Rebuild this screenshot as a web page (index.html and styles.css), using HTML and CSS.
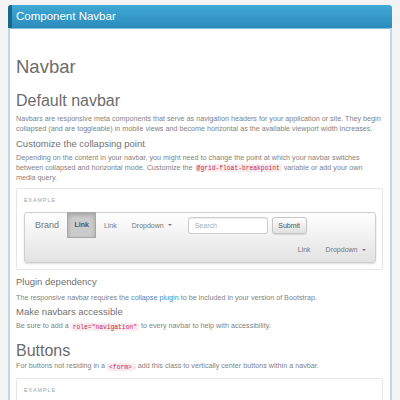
FILE: index.html
```html
<!DOCTYPE html>
<html lang="en">
<head>
<meta charset="utf-8">
<title>Component Navbar</title>
<link rel="stylesheet" href="styles.css">
</head>
<body>
<div class="panel">
  <div class="panel-head">Component Navbar</div>
  <div class="panel-body">
    <h1 class="title">Navbar</h1>
    <h2 class="sub">Default navbar</h2>
    <p class="text t1">Navbars are responsive meta components that serve as navigation headers for your application or site. They begin collapsed (and are toggleable) in mobile views and become horizontal as the available viewport width increases.</p>
    <h3 class="minor m1">Customize the collapsing point</h3>
    <p class="text t2">Depending on the content in your navbar, you might need to change the point at which your navbar switches between collapsed and horizontal mode. Customize the <code class="code">@grid-float-breakpoint</code> variable or add your own media query.</p>
    <div class="example">
      <div class="example-label">EXAMPLE</div>
      <div class="navbar">
        <div class="nav-row">
          <span class="brand">Brand</span>
          <ul class="nav">
            <li class="nav-item active">Link</li>
            <li class="nav-item">Link</li>
            <li class="nav-item">Dropdown <span class="caret"></span></li>
          </ul>
          <div class="nav-form">
            <span class="search">Search</span>
            <span class="btn">Submit</span>
          </div>
        </div>
        <div class="nav-row row-right">
          <ul class="nav">
            <li class="nav-item">Link</li>
            <li class="nav-item">Dropdown <span class="caret"></span></li>
          </ul>
        </div>
      </div>
    </div>
    <h3 class="minor m2">Plugin dependency</h3>
    <p class="text t3">The responsive navbar requires the <a class="link" href="#">collapse plugin</a> to be included in your version of Bootstrap.</p>
    <h3 class="minor m3">Make navbars accessible</h3>
    <p class="text t4">Be sure to add a <code class="code">role="navigation"</code> to every navbar to help with accessibility.</p>
    <h2 class="sub s2">Buttons</h2>
    <p class="text t5">For buttons not residing in a <code class="code">&lt;form&gt;</code>, add this class to vertically center buttons within a navbar.</p>
    <div class="example ex2">
      <div class="example-label">EXAMPLE</div>
    </div>
  </div>
</div>
</body>
</html>
```
FILE: styles.css
```css
html, body {
  margin: 0;
  padding: 0;
}
body {
  background: #f3f3f3;
  font-family: "Liberation Sans", Arial, sans-serif;
  padding: 5px 8px 0 8px;
  overflow: hidden;
}
.panel {
  background: #ffffff;
  border-radius: 3px 3px 0 0;
}
.panel-head {
  height: 23px;
  line-height: 23px;
  background: linear-gradient(#40a9d5, #2b8bbb);
  border-left: 4px solid #1c6787;
  border-radius: 3px 3px 0 0;
  color: #ffffff;
  font-size: 11.5px;
  padding-left: 4px;
  box-shadow: 0 1px 0 #7fbfe0;
}
.panel-body {
  border-left: 2px solid #c3d7ec;
  border-right: 2px solid #c3d7ec;
  padding: 29px 7px 20px 6px;
  height: 400px;
}
.title {
  margin: 0;
  font-weight: normal;
  font-size: 18.5px;
  line-height: 20px;
  color: #6c6c6c;
}
.sub {
  margin: 15px 0 0 0;
  font-weight: normal;
  font-size: 16px;
  line-height: 18px;
  color: #6c6c6c;
}
.minor {
  margin: 0;
  font-weight: normal;
  font-size: 9.5px;
  line-height: 12px;
  color: #707070;
}
.text {
  margin: 0;
  font-size: 7.2px;
  line-height: 10.1px;
  color: #828282;
}
.t1 { margin-top: 4px; }
.m1 { margin-top: 4px; }
.t2 { margin-top: 2.5px; }
.m2 { margin-top: 6px; }
.t3 { margin-top: 5px; }
.m3 { margin-top: 3px; }
.t4 { margin-top: 3px; }
.s2 { margin-top: 11px; }
.t5 { margin-top: 1px; }
.code {
  font-family: "Liberation Mono", "Courier New", monospace;
  font-size: 6.3px;
  line-height: 1;
  color: #c7254e;
  background: #f9ecef;
  padding: 0.5px 2px;
  border-radius: 2px;
}
.link {
  color: #428bca;
  text-decoration: none;
}
.example {
  margin-top: 5px;
  border: 1px solid #e6e6e6;
  border-radius: 2px;
  padding: 7px 6px 6px 7px;
}
.ex2 {
  margin-top: 7px;
}
.example-label {
  font-size: 5.3px;
  line-height: 8px;
  letter-spacing: 1px;
  color: #a0a0a0;
}
.navbar {
  margin-top: 8px;
  border: 1px solid #cfcfcf;
  border-radius: 3px;
  background: linear-gradient(#ffffff, #e2e2e2);
  box-shadow: 0 1px 2px rgba(0, 0, 0, 0.15);
  padding: 0 2px 0 10px;
}
.nav-row {
  display: flex;
  align-items: center;
  height: 25px;
}
.row-right {
  justify-content: flex-end;
  height: 24px;
}
.brand {
  font-size: 9px;
  color: #777;
  margin-right: 8px;
}
.nav {
  display: flex;
  list-style: none;
  margin: 0;
  padding: 0;
  height: 100%;
}
.nav-item {
  display: flex;
  align-items: center;
  padding: 0 7.5px;
  font-size: 7px;
  color: #777;
}
.nav-item.active {
  background: #cbcbcb;
  color: #555;
  font-weight: bold;
  box-shadow: inset 0 2px 4px rgba(0, 0, 0, 0.2);
  border: 1px solid #a8a8a8;
  margin-top: -1px;
  height: 26px;
  box-sizing: border-box;
  padding: 0 6.5px;
}
.caret {
  display: inline-block;
  width: 0;
  height: 0;
  margin-left: 4px;
  border-top: 2.5px solid #777;
  border-left: 2px solid transparent;
  border-right: 2px solid transparent;
}
.nav-form {
  display: flex;
  align-items: center;
  margin-left: 8.5px;
}
.search {
  box-sizing: border-box;
  width: 80px;
  height: 17px;
  line-height: 15px;
  border: 1px solid #cccccc;
  border-radius: 3px;
  background: #ffffff;
  box-shadow: inset 0 1px 1px rgba(0, 0, 0, 0.075);
  font-size: 7px;
  color: #aaaaaa;
  padding-left: 6px;
}
.btn {
  box-sizing: border-box;
  width: 35px;
  height: 17px;
  line-height: 15px;
  margin-left: 4px;
  border: 1px solid #c6c6c6;
  border-radius: 3px;
  background: linear-gradient(#ffffff, #e0e0e0);
  box-shadow: 0 1px 1px rgba(0, 0, 0, 0.12);
  font-size: 7px;
  color: #555;
  text-align: center;
}
```
